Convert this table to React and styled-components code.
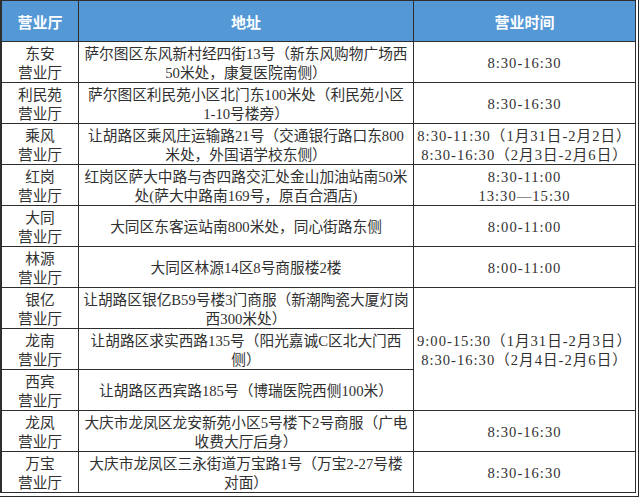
import React from 'react';
import styled, { createGlobalStyle } from 'styled-components';

const Global = createGlobalStyle`
  html, body { margin: 0; padding: 0; background: #ffffff; }
  body { font-family: "Liberation Serif", "Noto Sans CJK SC", serif; }
`;

const Frame = styled.div`
  width: fit-content;
  padding: 0 2px 3px 0;
  border-right: 1px solid #2a2a2a;
  border-bottom: 1px solid #2a2a2a;
`;

const Grid = styled.div`
  display: grid;
  grid-template-columns: 76px 334px 221px;
  grid-template-rows: repeat(12, 40px);
  gap: 1px;
  padding: 1px 1px 1px 2px;
  background: #2e2e2e;
`;

const HeadCell = styled.div`
  background: #5598d6;
  color: #ffffff;
  display: flex;
  align-items: center;
  justify-content: center;
  font-family: "Noto Sans CJK SC", sans-serif;
  font-weight: 700;
  font-size: 15px;
`;

const Cell = styled.div`
  background: #ffffff;
  color: #303030;
  display: flex;
  flex-direction: column;
  align-items: center;
  justify-content: center;
  text-align: center;
  grid-column: ${p => p.$col};
  grid-row: ${p => (p.$span ? `span ${p.$span}` : 'auto')};
  font-size: ${p => (p.$time ? '14.6px' : '14.7px')};
  letter-spacing: ${p => (p.$time ? '1px' : '0')};
  line-height: 18.5px;
  padding-top: 3px;
  box-sizing: border-box;
`;

const Line = styled.span`
  display: block;
  white-space: nowrap;
`;

const rows = [
  { name: ['东安', '营业厅'], addr: ['萨尔图区东风新村经四街13号（新东风购物广场西', '50米处，康复医院南侧）'], time: ['8:30-16:30'] },
  { name: ['利民苑', '营业厅'], addr: ['萨尔图区利民苑小区北门东100米处（利民苑小区', '1-10号楼旁）'], time: ['8:30-16:30'] },
  { name: ['乘风', '营业厅'], addr: ['让胡路区乘风庄运输路21号（交通银行路口东800', '米处，外国语学校东侧）'], time: ['8:30-11:30（1月31日-2月2日）', '8:30-16:30（2月3日-2月6日）'] },
  { name: ['红岗', '营业厅'], addr: ['红岗区萨大中路与杏四路交汇处金山加油站南50米', '处(萨大中路南169号，原百合酒店)'], time: ['8:30-11:00', '13:30—15:30'] },
  { name: ['大同', '营业厅'], addr: ['大同区东客运站南800米处，同心街路东侧'], time: ['8:00-11:00'] },
  { name: ['林源', '营业厅'], addr: ['大同区林源14区8号商服楼2楼'], time: ['8:00-11:00'] },
  { name: ['银亿', '营业厅'], addr: ['让胡路区银亿B59号楼3门商服（新潮陶瓷大厦灯岗', '西300米处）'], time: ['9:00-15:30（1月31日-2月3日）', '8:30-16:30（2月4日-2月6日）'], span: 3 },
  { name: ['龙南', '营业厅'], addr: ['让胡路区求实西路135号（阳光嘉诚C区北大门西', '侧）'] },
  { name: ['西宾', '营业厅'], addr: ['让胡路区西宾路185号（博瑞医院西侧100米）'] },
  { name: ['龙凤', '营业厅'], addr: ['大庆市龙凤区龙安新苑小区5号楼下2号商服（广电', '收费大厅后身）'], time: ['8:30-16:30'] },
  { name: ['万宝', '营业厅'], addr: ['大庆市龙凤区三永街道万宝路1号（万宝2-27号楼', '对面）'], time: ['8:30-16:30'] },
];

const Lines = ({ items }) => items.map((t, i) => <Line key={i}>{t}</Line>);

export default function App() {
  return (
    <>
      <Global />
      <Frame>
        <Grid>
          <HeadCell>营业厅</HeadCell>
          <HeadCell>地址</HeadCell>
          <HeadCell>营业时间</HeadCell>
          {rows.map((r, i) => (
            <React.Fragment key={i}>
              <Cell $col={1}><Lines items={r.name} /></Cell>
              <Cell $col={2}><Lines items={r.addr} /></Cell>
              {r.time && (
                <Cell $col={3} $time $span={r.span}><Lines items={r.time} /></Cell>
              )}
            </React.Fragment>
          ))}
        </Grid>
      </Frame>
    </>
  );
}
